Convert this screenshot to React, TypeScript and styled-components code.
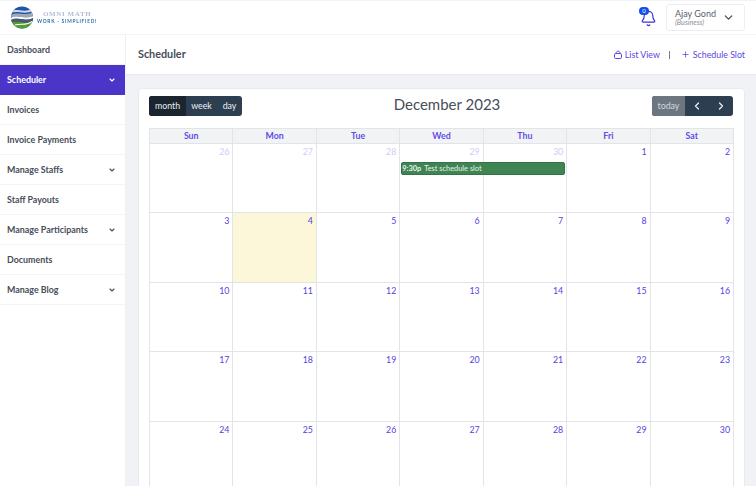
import React from 'react'
import styled, { createGlobalStyle } from 'styled-components'
import { Bell, ChevronDown, ChevronLeft, ChevronRight, Plus } from 'lucide-react'

const Global = createGlobalStyle`
  html, body { margin: 0; padding: 0; height: 100%; overflow: hidden; background: #f1f2f5; }
  body { font-family: Lato, "Noto Sans", sans-serif; color: #343a46; }
  * { box-sizing: border-box; }
`

const Page = styled.div`
  width: 756px;
  height: 486px;
  overflow: hidden;
  display: flex;
  flex-direction: column;
`

const Header = styled.header`
  height: 35px;
  flex: none;
  background: #fff;
  border-top: 1px solid #f1f3f8;
  border-bottom: 1px solid #f2f3f5;
  display: flex;
  align-items: center;
  justify-content: space-between;
  padding: 0 11px 0 11px;
`

const Brand = styled.div`
  display: flex;
  align-items: center;
  gap: 4px;
`

const BrandText = styled.div`
  display: flex;
  flex-direction: column;
  align-items: center;
  line-height: 6.5px;
  filter: blur(0.4px);
`

const BrandName = styled.span`
  font-family: "Liberation Serif", serif;
  font-size: 7px;
  font-weight: 700;
  color: #b3bdd6;
  letter-spacing: 0.6px;
`

const BrandTag = styled.span`
  font-size: 4.8px;
  font-weight: 700;
  color: #2f6fa8;
  letter-spacing: 0.75px;
`

const HeaderRight = styled.div`
  display: flex;
  align-items: center;
  gap: 8px;
`

const BellWrap = styled.div`
  position: relative;
  width: 18px;
  height: 19px;
  color: #3d35d6;
  display: flex;
  align-items: flex-end;
`

const BellBadge = styled.span`
  position: absolute;
  top: -1px;
  left: -1px;
  width: 10px;
  height: 8px;
  border-radius: 4px;
  background: #1450e6;
  color: #fff;
  font-size: 6px;
  line-height: 8px;
  text-align: center;
`

const UserBox = styled.div`
  width: 79px;
  height: 27px;
  border: 1px solid #eceef1;
  border-radius: 3px;
  display: flex;
  align-items: center;
  justify-content: space-between;
  padding: 0 9px 0 8px;
  color: #454b57;
`

const UserText = styled.div`
  display: flex;
  flex-direction: column;
`

const UserName = styled.span`
  font-size: 9px;
  line-height: 10px;
  color: #5a6070;
`

const UserRole = styled.span`
  font-size: 7.2px;
  line-height: 8px;
  font-style: italic;
  color: #8b909b;
`

const Body = styled.div`
  flex: 1;
  display: flex;
  min-height: 0;
`

const Sidebar = styled.nav`
  width: 126px;
  flex: none;
  background: #fff;
  border-right: 1px solid #eef0f3;
`

const NavItem = styled.div<{ $active?: boolean }>`
  height: 30px;
  display: flex;
  align-items: center;
  justify-content: space-between;
  padding: 0 9px 0 7px;
  font-size: 8.9px;
  font-weight: 700;
  background: ${({ $active }) => ($active ? '#4a35c8' : '#fff')};
  color: ${({ $active }) => ($active ? '#fff' : '#474d59')};
  border-bottom: 1px solid ${({ $active }) => ($active ? '#4a35c8' : '#f3f4f6')};
`

const Main = styled.main`
  flex: 1;
  min-width: 0;
  display: flex;
  flex-direction: column;
`

const SubHeader = styled.div`
  height: 40px;
  flex: none;
  background: #fff;
  border-bottom: 1px solid #e8e9ec;
  display: flex;
  align-items: center;
  justify-content: space-between;
  padding: 0 11px 2px 12px;
`

const PageTitle = styled.h1`
  margin: 0;
  font-size: 10.8px;
  font-weight: 700;
  color: #474d59;
`

const SubActions = styled.div`
  display: flex;
  align-items: center;
  margin-top: 2px;
  font-size: 8.8px;
  color: #5a45e0;
`

const ActionLink = styled.span`
  display: flex;
  align-items: center;
  gap: 3px;
`

const Divider = styled.span`
  width: 1px;
  height: 8px;
  margin: 0 11px 0 9px;
  background: #777b85;
`

const Content = styled.div`
  flex: 1;
  min-height: 0;
  padding: 13px 11px 0 12px;
`

const Card = styled.section`
  background: #fff;
  border: 1px solid #e9eaed;
  border-radius: 4px 4px 0 0;
  padding: 6px 11px 0 10px;
  height: 420px;
`

const Toolbar = styled.div`
  display: flex;
  align-items: center;
  justify-content: space-between;
  height: 21px;
  margin-bottom: 12px;
`

const BtnGroup = styled.div`
  display: flex;
  height: 20px;
  border-radius: 3px;
  overflow: hidden;
  background: #2c3e50;
`

const Btn = styled.span<{ $active?: boolean; $muted?: boolean; $w: number }>`
  width: ${({ $w }) => $w}px;
  display: flex;
  align-items: center;
  justify-content: center;
  color: ${({ $muted }) => ($muted ? '#d5d8dc' : '#eceef0')};
  font-size: 8.8px;
  background: ${({ $active, $muted }) =>
    $active ? '#1a252f' : $muted ? '#6c7681' : 'transparent'};
`

const MonthTitle = styled.h2`
  margin: -3px 0 0;
  font-size: 15px;
  font-weight: 400;
  color: #474d59;
`

const HeadRow = styled.div`
  display: grid;
  grid-template-columns: repeat(7, 1fr);
  width: 585px;
  border-top: 1px solid #e3e4e7;
  border-left: 1px solid #e3e4e7;
`

const DayName = styled.div`
  height: 14.6px;
  background: #f2f3f5;
  border-right: 1px solid #e3e4e7;
  border-bottom: 1px solid #e3e4e7;
  text-align: center;
  font-size: 8.8px;
  line-height: 14.6px;
  font-weight: 700;
  color: #5f4fe6;
`

const GridBody = styled.div`
  display: grid;
  grid-template-columns: repeat(7, 1fr);
  grid-auto-rows: 69.6px;
  width: 585px;
  border-left: 1px solid #e3e4e7;
`

const Cell = styled.div<{ $today?: boolean; $other?: boolean }>`
  position: relative;
  border-right: 1px solid #e3e4e7;
  border-bottom: 1px solid #e3e4e7;
  background: ${({ $today }) => ($today ? '#fdf7d9' : '#fff')};
  text-align: right;
  padding: 2px 3px 0 0;
  font-size: 8.8px;
  line-height: 12px;
  color: ${({ $other }) => ($other ? '#d0caf7' : '#5443e2')};
`

const EventBar = styled.div`
  position: absolute;
  top: 18px;
  left: 1px;
  width: 164px;
  height: 13px;
  z-index: 1;
  background: #3f8553;
  border: 1px solid #357047;
  border-radius: 2px;
  color: #eaf2ec;
  font-size: 7.4px;
  line-height: 11px;
  text-align: left;
  padding-left: 0;
  white-space: nowrap;
`

const EventTime = styled.b`
  font-weight: 700;
  margin-right: 3px;
`

const navItems = [
  { label: 'Dashboard' },
  { label: 'Scheduler', caret: true, active: true },
  { label: 'Invoices' },
  { label: 'Invoice Payments' },
  { label: 'Manage Staffs', caret: true },
  { label: 'Staff Payouts' },
  { label: 'Manage Participants', caret: true },
  { label: 'Documents' },
  { label: 'Manage Blog', caret: true },
]

const dayNames = ['Sun', 'Mon', 'Tue', 'Wed', 'Thu', 'Fri', 'Sat']

const days = [
  ...[26, 27, 28, 29, 30].map((d) => ({ d, other: true })),
  ...Array.from({ length: 30 }, (_, i) => ({ d: i + 1, other: false })),
]

const Logo = () => (
  <svg width="22" height="23" viewBox="0 0 22 23">
    <defs>
      <clipPath id="globe">
        <circle cx="11" cy="11.5" r="11" />
      </clipPath>
    </defs>
    <g clipPath="url(#globe)">
      <rect width="22" height="23" fill="#1c55ad" />
      <path d="M0 5 C6 2 12 7 22 3 V5 C13 9 6 4 0 7Z" fill="#cfd8e6" />
      <path d="M0 9 C7 5 13 11 22 6 V10 C13 14 7 8 0 12Z" fill="#a3a8ae" />
      <path d="M0 12 C7 8 13 14 22 10 V12 C14 16 7 10 0 14Z" fill="#fff" />
      <path d="M0 14 C6 11 14 17 22 12 V15 C14 19 7 13 0 17Z" fill="#55585c" />
      <path d="M0 17 C7 13 14 20 22 15 V23 H0Z" fill="#4f9e2f" />
      <path d="M4 19 C10 17 15 20 21 15.5" fill="none" stroke="#fff" strokeWidth="1.1" />
    </g>
  </svg>
)

const LockIcon = () => (
  <svg width="8" height="9" viewBox="0 0 8 9" fill="none" stroke="currentColor" strokeWidth="1">
    <rect x="0.5" y="3.5" width="7" height="5" rx="1.2" />
    <path d="M2 3.5 C2 0.4 6 0.4 6 3.5" />
  </svg>
)

const App = () => (
  <Page>
    <Global />
    <Header>
      <Brand>
        <Logo />
        <BrandText>
          <BrandName>OMNI MATH</BrandName>
          <BrandTag>WORK - SIMPLIFIED!</BrandTag>
        </BrandText>
      </Brand>
      <HeaderRight>
        <BellWrap>
          <Bell size={17} strokeWidth={1.7} />
          <BellBadge>0</BellBadge>
        </BellWrap>
        <UserBox>
          <UserText>
            <UserName>Ajay Gond</UserName>
            <UserRole>(Business)</UserRole>
          </UserText>
          <ChevronDown size={13} strokeWidth={2.4} />
        </UserBox>
      </HeaderRight>
    </Header>
    <Body>
      <Sidebar>
        {navItems.map((item) => (
          <NavItem key={item.label} $active={item.active}>
            {item.label}
            {item.caret && <ChevronDown size={8} strokeWidth={3.4} />}
          </NavItem>
        ))}
      </Sidebar>
      <Main>
        <SubHeader>
          <PageTitle>Scheduler</PageTitle>
          <SubActions>
            <ActionLink>
              <LockIcon />
              List View
            </ActionLink>
            <Divider />
            <ActionLink>
              <Plus size={9} strokeWidth={2} />
              Schedule Slot
            </ActionLink>
          </SubActions>
        </SubHeader>
        <Content>
          <Card>
            <Toolbar>
              <BtnGroup>
                <Btn $active $w={37}>month</Btn>
                <Btn $w={31}>week</Btn>
                <Btn $w={25}>day</Btn>
              </BtnGroup>
              <MonthTitle>December 2023</MonthTitle>
              <BtnGroup>
                <Btn $muted $w={33}>today</Btn>
                <Btn $w={24}><ChevronLeft size={12} strokeWidth={2.6} /></Btn>
                <Btn $w={24}><ChevronRight size={12} strokeWidth={2.6} /></Btn>
              </BtnGroup>
            </Toolbar>
            <HeadRow>
              {dayNames.map((name) => (
                <DayName key={name}>{name}</DayName>
              ))}
            </HeadRow>
            <GridBody>
              {days.map(({ d, other }) => (
                <Cell key={`${other}-${d}`} $other={other} $today={!other && d === 4}>
                  {d}
                  {other && d === 29 && (
                    <EventBar>
                      <EventTime>9:30p</EventTime>Test schedule slot
                    </EventBar>
                  )}
                </Cell>
              ))}
            </GridBody>
          </Card>
        </Content>
      </Main>
    </Body>
  </Page>
)

export default App
